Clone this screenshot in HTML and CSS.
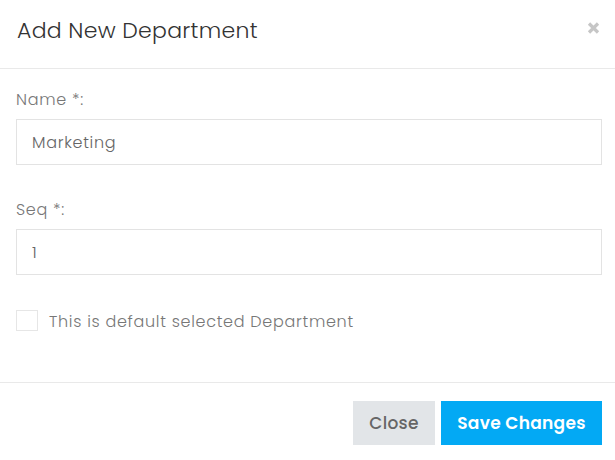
FILE: index.html
```html
<!DOCTYPE html>
<html lang="en">
<head>
<meta charset="utf-8">
<title>Add New Department</title>
<link rel="stylesheet" href="styles.css">
</head>
<body>
<div class="modal">
  <div class="modal-header">
    <h4 class="modal-title">Add New Department</h4>
    <button class="close-x" type="button" aria-label="Close">
      <svg width="13" height="12" viewBox="0 0 13 12"><path d="M2 1.5 L11 10.5 M11 1.5 L2 10.5" stroke="#c6c6c6" stroke-width="3.2" stroke-linecap="butt"/></svg>
    </button>
  </div>
  <div class="modal-body">
    <div class="form-group">
      <label class="form-label">Name *:</label>
      <input class="form-control" type="text" value="Marketing">
    </div>
    <div class="form-group">
      <label class="form-label">Seq *:</label>
      <input class="form-control" type="text" value="1">
    </div>
    <label class="check-row">
      <span class="check-box"></span>
      <span class="check-text">This is default selected Department</span>
    </label>
  </div>
  <div class="modal-footer">
    <button class="btn btn-close" type="button">Close</button>
    <button class="btn btn-save" type="button">Save Changes</button>
  </div>
</div>
</body>
</html>
```
FILE: styles.css
```css
* { box-sizing: border-box; }
html, body { margin: 0; padding: 0; background: #fff; }
body {
  font-family: "Poppins", "Open Sans", "Liberation Sans", sans-serif;
  color: #666;
}
.modal {
  width: 615px;
  height: 460px;
  background: #fff;
  display: flex;
  flex-direction: column;
}
.modal-header {
  height: 69px;
  border-bottom: 1px solid #e9e9e9;
  display: flex;
  justify-content: space-between;
  align-items: flex-start;
  padding: 14px 15px 0 17px;
}
.modal-title {
  margin: 0;
  font-size: 22px;
  line-height: 34px;
  font-weight: 300;
  color: #333;
  letter-spacing: 0.3px;
}
.close-x {
  border: 0;
  background: none;
  padding: 0;
  margin-top: 8px;
  width: 13px;
  height: 12px;
  display: block;
  cursor: pointer;
}
.close-x svg { display: block; }
.modal-body {
  padding: 19px 13px 0 16px;
  height: 314px;
  border-bottom: 1px solid #e9e9e9;
}
.form-group { margin-bottom: 33px; }
.form-label {
  display: block;
  font-size: 16px;
  line-height: 24px;
  font-weight: 300;
  color: #777;
  margin-bottom: 7px;
  letter-spacing: 0.7px;
}
.form-control {
  display: block;
  width: 100%;
  height: 46px;
  border: 1px solid #e3e3e3;
  border-radius: 0;
  padding: 0 15px;
  font-family: inherit;
  font-size: 16px;
  font-weight: 300;
  color: #666;
  letter-spacing: 0.7px;
  background: #fff;
  outline: none;
}
.check-row {
  display: flex;
  align-items: center;
  gap: 11px;
  margin-top: -2px;
}
.check-box {
  width: 22px;
  height: 21px;
  border: 1px solid #e6e6e6;
  background: #fff;
  flex: none;
}
.check-text {
  font-size: 16px;
  line-height: 24px;
  font-weight: 300;
  color: #777;
  letter-spacing: 0.7px;
  padding-top: 4px;
}
.modal-footer {
  display: flex;
  justify-content: flex-end;
  gap: 6px;
  padding: 18px 13px 0 16px;
}
.btn {
  height: 44px;
  border: 0;
  border-radius: 0;
  font-family: inherit;
  font-size: 17px;
  font-weight: 600;
  letter-spacing: 0.3px;
  padding: 0 8px;
  cursor: pointer;
}
.btn-close {
  width: 82px;
  background: #e2e5e8;
  color: #666;
  font-weight: 500;
}
.btn-save {
  width: 161px;
  background: #03a9f4;
  color: #fff;
}
```
